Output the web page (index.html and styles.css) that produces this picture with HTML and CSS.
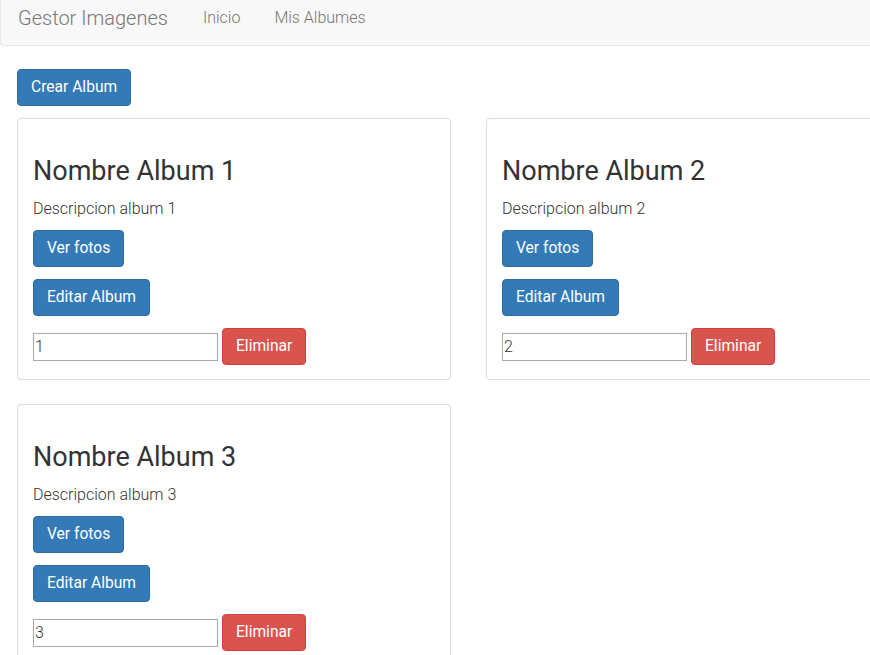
FILE: index.html
```html
<!DOCTYPE html>
<html lang="es">
<head>
<meta charset="utf-8">
<title>Gestor Imagenes</title>
<link rel="stylesheet" href="styles.css">
</head>
<body>
<div class="page">
  <nav class="navbar">
    <a class="brand" href="#">Gestor Imagenes</a>
    <ul class="nav-links">
      <li><a href="#">Inicio</a></li>
      <li><a href="#">Mis Albumes</a></li>
    </ul>
  </nav>
  <main class="content">
    <div class="toolbar"><button class="btn btn-primary" type="button">Crear Album</button></div>
    <div class="albums">
      <section class="card">
        <h2 class="card-title">Nombre Album 1</h2>
        <p class="card-desc">Descripcion album 1</p>
        <div class="card-row"><button class="btn btn-primary" type="button">Ver fotos</button></div>
        <div class="card-row"><button class="btn btn-primary" type="button">Editar Album</button></div>
        <form class="card-row delete-row">
          <input class="id-input" type="text" value="1">
          <button class="btn btn-danger" type="button">Eliminar</button>
        </form>
      </section>
      <section class="card">
        <h2 class="card-title">Nombre Album 2</h2>
        <p class="card-desc">Descripcion album 2</p>
        <div class="card-row"><button class="btn btn-primary" type="button">Ver fotos</button></div>
        <div class="card-row"><button class="btn btn-primary" type="button">Editar Album</button></div>
        <form class="card-row delete-row">
          <input class="id-input" type="text" value="2">
          <button class="btn btn-danger" type="button">Eliminar</button>
        </form>
      </section>
      <section class="card">
        <h2 class="card-title">Nombre Album 3</h2>
        <p class="card-desc">Descripcion album 3</p>
        <div class="card-row"><button class="btn btn-primary" type="button">Ver fotos</button></div>
        <div class="card-row"><button class="btn btn-primary" type="button">Editar Album</button></div>
        <form class="card-row delete-row">
          <input class="id-input" type="text" value="3">
          <button class="btn btn-danger" type="button">Eliminar</button>
        </form>
      </section>
    </div>
  </main>
</div>
</body>
</html>
```
FILE: styles.css
```css
html {
  overflow: hidden;
}
body {
  margin: 0;
  font-family: Roboto, "Liberation Sans", sans-serif;
  font-weight: 300;
  font-size: 16px;
  line-height: 23px;
  color: #333;
  background: #fff;
}
.page {
  width: 960px;
}
.navbar {
  display: flex;
  align-items: center;
  height: 45px;
  background: #f8f8f8;
  border-left: 1px solid #e7e7e7;
  border-bottom: 1px solid #e7e7e7;
  border-bottom-left-radius: 4px;
  padding-left: 17px;
}
.brand {
  font-size: 20px;
  color: #777;
  text-decoration: none;
  margin-right: 35px;
  margin-top: -8px;
}
.nav-links {
  display: flex;
  list-style: none;
  margin: 0;
  padding: 0;
  gap: 34px;
  margin-top: -11px;
}
.nav-links a {
  color: #777;
  text-decoration: none;
  font-size: 16px;
}
.content {
  padding: 23px 0 0 17px;
}
.toolbar {
  margin-bottom: 12px;
}
.btn {
  font-family: Roboto, "Liberation Sans", sans-serif;
  font-weight: 400;
  font-size: 15.6px;
  line-height: 23px;
  padding: 6px 13px;
  border-radius: 4px;
  border: 1px solid transparent;
  color: #fff;
  cursor: pointer;
}
.btn-primary {
  background: #337ab7;
  border-color: #2e6da4;
}
.btn-danger {
  background: #d9534f;
  border-color: #d43f3a;
}
.albums {
  display: grid;
  grid-template-columns: 434px 434px;
  column-gap: 35px;
  row-gap: 24px;
}
.card {
  border: 1px solid #ddd;
  border-radius: 4px;
  padding: 15px 15px 14px;
}
.card-title {
  font-weight: 400;
  font-size: 27px;
  line-height: 33px;
  margin: 21px 0 9px;
}
.card-desc {
  margin: 0 0 10px;
}
.card-row {
  margin: 0 0 12px;
}
.card-row:last-child {
  margin-bottom: 0;
}
.delete-row {
  display: flex;
  align-items: center;
  gap: 4px;
}
.id-input {
  width: 185px;
  height: 28px;
  box-sizing: border-box;
  border: 1px solid #a9a9a9;
  padding: 0 1px;
  font-family: Roboto, "Liberation Sans", sans-serif;
  font-weight: 300;
  font-size: 16px;
  color: #333;
  margin: 0;
}
```
